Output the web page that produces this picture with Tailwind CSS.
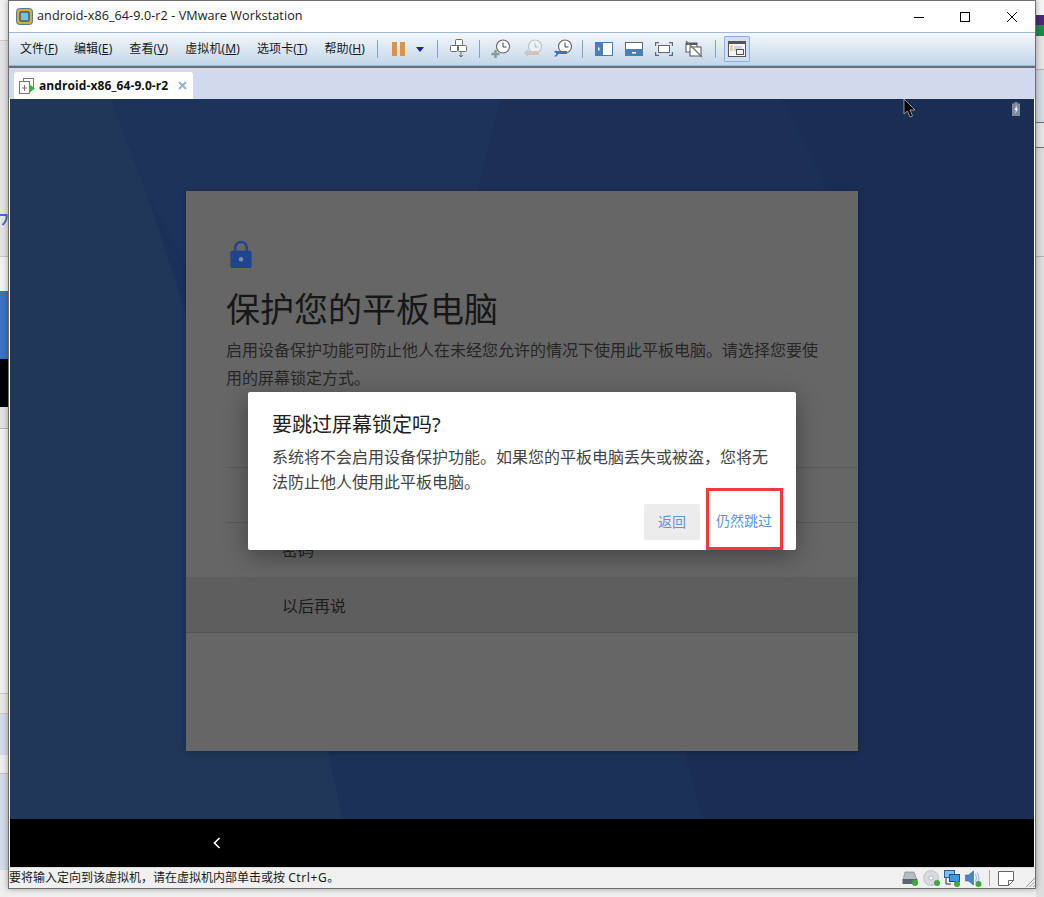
<!DOCTYPE html>
<html lang="zh-CN">
<head>
  <meta charset="UTF-8">
  <title>android-x86_64-9.0-r2 - VMware Workstation</title>
  <script src="https://cdn.jsdelivr.net/npm/@tailwindcss/browser@4"></script>
</head>
<body class="relative w-[1044px] h-[897px] overflow-hidden bg-[#f0f0f0] font-['Noto_Sans','Noto_Sans_CJK_SC',sans-serif]">

  <!-- desktop behind the window -->
  <div class="absolute left-0 top-0 w-[8px] h-[897px] flex flex-col">
    <div class="h-[40px] bg-[#f2f2f2]"></div>
    <div class="relative h-[216px] bg-[#e4e4e4] border-t border-[#c8c8c8]">
      <svg class="absolute left-0 top-[170px] w-[8px] h-[16px]" viewBox="0 0 8 16"><path d="M0 4h6.500q1 5-4 10" fill="none" stroke="#3f6fc4" stroke-width="2"/></svg>
    </div>
    <div class="h-[35px] bg-[#f2f2f2] border-t border-[#c8c8c8]"></div>
    <div class="h-[68px] bg-[#3f72c0]"></div>
    <div class="h-[48px] bg-black"></div>
    <div class="h-[22px] bg-[#e2e2e2] border-b border-[#b5b5b5]"></div>
    <div class="h-[264px] bg-[#f0f0f0]"></div>
    <div class="h-[20px] bg-[#e8e8e4] border-t border-[#c8c8c8]"></div>
    <div class="h-[42px] bg-[#d2dbe7] border-t border-[#c8c8c8]"></div>
    <div class="h-[18px] bg-[#eeeeee]"></div>
    <div class="h-[97px] bg-[#d2dbe7] border-t border-[#c0c0c0]"></div>
    <div class="flex-1 bg-[#eeeeee]"></div>
  </div>
  <div class="absolute right-0 top-0 w-[8px] h-[897px] flex flex-col bg-[#dedede]">
    <div class="h-[15px] bg-[#f4f4f4]"></div>
    <div class="h-[10px] bg-[#4a2a78]"></div>
    <div class="h-[11px] bg-[#1d8a4a]"></div>
    <div class="h-[33px] bg-[#e4e4e4]"></div>
    <div class="h-[53px] bg-[#d2dbe2] border-t border-[#b0b0b0]"></div>
    <div class="h-[25px] bg-[#e4e4e4] border-t border-[#6e6e6e]"></div>
    <div class="h-[109px] bg-[#dcdcdc] border-t border-[#6e6e6e]"></div>
    <div class="flex-1 bg-[#dedede] border-t border-[#b0b0b0]"></div>
  </div>

  <!-- VMware window -->
  <div class="absolute left-[8px] top-0 w-[1028px] h-[889px] flex flex-col bg-white border border-[#6e6e6e] shadow-[0_0_6px_rgba(0,0,0,0.35)]">

    <!-- title bar -->
    <div class="h-[31px] flex items-center bg-white shrink-0">
      <svg class="ml-[7px] w-[17px] h-[17px]" viewBox="0 0 17 17">
        <rect x="0.5" y="0.5" width="16" height="16" rx="3" fill="#e8a530" stroke="#4b7f9c"/>
        <rect x="4" y="4" width="9" height="9" rx="1" fill="#7dc3cf" stroke="#3b5f7a" stroke-width="1.5"/>
      </svg>
      <span class="ml-[4px] text-[12.6px] leading-none text-[#1a1a1a] font-['Open_Sans',sans-serif] tracking-[0.08px]">android-x86_64-9.0-r2 - VMware Workstation</span>
      <div class="ml-auto flex items-center">
        <svg class="w-[46px] h-[30px]" viewBox="0 0 46 30"><path d="M17 15.5h10" stroke="#000" stroke-width="1"/></svg>
        <svg class="w-[46px] h-[30px]" viewBox="0 0 46 30"><rect x="17.5" y="10.5" width="9" height="9" fill="none" stroke="#000" stroke-width="1"/></svg>
        <svg class="w-[46px] h-[30px]" viewBox="0 0 46 30"><path d="M18 10l10 10M28 10l-10 10" stroke="#000" stroke-width="1"/></svg>
      </div>
    </div>

    <!-- menu and toolbar -->
    <div class="h-[34px] shrink-0 flex items-center border-y border-[#9db9d4] bg-gradient-to-b from-[#f4f7fc] to-[#c3d6ea] text-[12px] text-[#1a1a1a]">
      <div class="flex items-center ml-[11px] gap-[17px] whitespace-nowrap tracking-[0.1px]">
        <span>文件(<span class="underline">F</span>)</span>
        <span class="-ml-[1px]">编辑(<span class="underline">E</span>)</span>
        <span>查看(<span class="underline">V</span>)</span>
        <span>虚拟机(<span class="underline">M</span>)</span>
        <span>选项卡(<span class="underline">T</span>)</span>
        <span>帮助(<span class="underline">H</span>)</span>
      </div>
      <div class="ml-auto mr-[285px] flex items-center">
        <div class="w-px h-[18px] bg-[#7ea3cc] mr-[14px]"></div>
        <!-- pause -->
        <div class="flex gap-[3px]"><div class="w-[5px] h-[14px] bg-[#d8934b]"></div><div class="w-[5px] h-[14px] bg-[#d8934b]"></div></div>
        <svg class="ml-[11px] w-[8px] h-[5px]" viewBox="0 0 8 5"><path d="M0 0h8L4 5z" fill="#1d1db8"/></svg>
        <div class="w-px h-[18px] bg-[#7ea3cc] ml-[13px] mr-[12px]"></div>
        <!-- send keys -->
        <svg class="w-[17px] h-[20px]" viewBox="0 0 17 20" fill="#fff" stroke="#6b6b6b">
          <rect x="5.5" y="0.5" width="7" height="6" rx="1"/><rect x="0.5" y="6.5" width="7" height="6" rx="1"/><rect x="8.5" y="6.5" width="8" height="6" rx="1"/>
          <path d="M11 13v5M9 16l2 2 2-2" fill="none"/>
        </svg>
        <div class="w-px h-[18px] bg-[#7ea3cc] ml-[12px] mr-[11px]"></div>
        <!-- snapshot -->
        <svg class="w-[20px] h-[20px]" viewBox="0 0 20 20" fill="none">
          <circle cx="12" cy="7.5" r="6.5" fill="#fff" stroke="#6b6b6b" stroke-width="1.2"/><path d="M12 3.5v4.5h3.5" stroke="#444"/>
          <path d="M4.5 11v8M0.5 15h8" stroke="#7fa08e" stroke-width="2.4"/>
        </svg>
        <svg class="ml-[12px] w-[20px] h-[20px] opacity-40" viewBox="0 0 20 20" fill="none">
          <circle cx="12" cy="7.5" r="6.5" fill="#fff" stroke="#8a8a8a" stroke-width="1.2"/><path d="M12 3.5v4.5h3.5" stroke="#777"/>
          <path d="M5 12h11v4H5v2l-4-4 4-4z" fill="#c89a72"/>
        </svg>
        <svg class="ml-[10px] w-[20px] h-[20px]" viewBox="0 0 20 20" fill="none">
          <circle cx="12" cy="7.5" r="6.5" fill="#fff" stroke="#6b6b6b" stroke-width="1.2"/><path d="M12 3.5v4.5h3.5" stroke="#444"/>
          <path d="M4 12h10v3H5a2.5 2.5 0 0 1-4 2l2-1v-2l-2-1a2.5 2.5 0 0 1 3-1z" fill="#3a75b5"/>
        </svg>
        <div class="w-px h-[18px] bg-[#7ea3cc] ml-[9px] mr-[12px]"></div>
        <!-- view modes -->
        <svg class="w-[18px] h-[14px]" viewBox="0 0 18 14"><rect x="0.5" y="0.5" width="17" height="13" fill="#fff" stroke="#4a7fb5"/><rect width="8" height="14" fill="#4a7fb5"/><rect x="3" y="5.5" width="1.5" height="3" fill="#fff"/></svg>
        <svg class="ml-[12px] w-[18px] h-[14px]" viewBox="0 0 18 14"><rect x="0.5" y="0.5" width="17" height="13" fill="#fff" stroke="#666"/><rect y="7" width="18" height="7" fill="#4a7fb5"/><rect x="7" y="10" width="4" height="1.5" fill="#fff"/></svg>
        <svg class="ml-[12px] w-[18px] h-[14px]" viewBox="0 0 18 14" fill="none" stroke="#666"><rect x="3.5" y="3.5" width="11" height="7" fill="#fff"/><path d="M0.5 4V0.5H4M14 .5h3.5V4M.5 10v3.5H4M14 13.5h3.5V10" stroke-width="1.3"/></svg>
        <svg class="ml-[12px] w-[18px] h-[18px]" viewBox="0 0 18 18" fill="none"><rect x="1" y="3" width="11" height="9" fill="#fff" stroke="#555"/><rect x="5" y="7" width="11" height="9" fill="#fff" stroke="#555"/><rect x="1" y="3" width="11" height="2" fill="#555"/><path d="M1 1l16 16" stroke="#777" stroke-width="1.5"/></svg>
        <div class="w-px h-[18px] bg-[#7ea3cc] ml-[12px] mr-[8px]"></div>
        <div class="w-[26px] h-[26px] flex items-center justify-center border border-[#8db1d8] bg-[#cfe0f3] rounded-[1px]">
          <svg class="w-[18px] h-[16px]" viewBox="0 0 18 16" fill="none"><rect x="0.5" y="0.5" width="17" height="15" fill="#f5f5f5" stroke="#555"/><rect width="18" height="3" fill="#555"/><path d="M2 5h3M2 7h3M2 9h3" stroke="#e0b050"/><rect x="6" y="5" width="8" height="5" fill="#c9d6ea"/><rect x="8.5" y="8.5" width="7" height="5" fill="#eee" stroke="#555"/></svg>
        </div>
      </div>
    </div>

    <!-- tab strip -->
    <div class="h-[33px] shrink-0 flex items-end border-t-2 border-[#6e6e6e] bg-[#d3d9ec]">
      <div class="ml-[5px] w-[179px] h-[27px] flex items-center bg-white rounded-t-[3px]">
        <svg class="ml-[5px] w-[16px] h-[16px]" viewBox="0 0 16 16" fill="#fff" stroke="#777"><rect x="4.5" y="0.5" width="10" height="10"/><rect x="0.5" y="3.5" width="10" height="12"/><path d="M5.5 7v6M3 10h5"/><path d="M10 6l6 4.500-6 4.500z" fill="#3eb03e" stroke="none"/></svg>
        <span class="ml-[4px] text-[12px] font-bold text-[#111] font-['Open_Sans',sans-serif] leading-none tracking-[0.1px]">android-x86_64-9.0-r2</span>
        <svg class="ml-auto mr-[6px] w-[9px] h-[9px]" viewBox="0 0 9 9"><path d="M1 1l7 7M8 1l-7 7" stroke="#9fb3c8" stroke-width="2"/></svg>
      </div>
    </div>

    <!-- guest screen -->
    <div class="relative w-[1024px] ml-[1px] h-[720px] shrink-0 bg-[#1c3157] overflow-hidden">
      <svg class="absolute inset-0 w-full h-full" viewBox="0 0 1024 720">
        <path d="M0 0H101L136 92L317 649L333 720H0z" fill="#20375a"/>
        <path d="M101 0H490L467 92L300 400L136 92z" fill="#1e3359"/>
        <path d="M490 0H771L817 92L700 300L467 92z" fill="#1b3054"/>
        <path d="M771 0H1024V720H693L673 649L848 400L817 92z" fill="#1a2e54"/>
      </svg>

      <!-- dimmed setup card -->
      <div class="absolute left-[176px] top-[92px] w-[672px] h-[560px] bg-[#666666] shadow-[0_1px_6px_rgba(0,0,0,0.3)] flex flex-col">
        <svg class="ml-[43px] mt-[49px] w-[24px] h-[29px]" viewBox="0 0 24 30">
          <path d="M6 12V8a6 6 0 0 1 12 0v4" fill="none" stroke="#1f4490" stroke-width="2.6"/>
          <rect x="1" y="11" width="22" height="18" rx="2" fill="#1f4490"/>
          <circle cx="12" cy="20" r="2.3" fill="#7c8aa8"/>
        </svg>
        <h1 class="ml-[40px] mt-[17px] text-[34px] leading-[46px] font-normal text-[#171717] whitespace-nowrap">保护您的平板电脑</h1>
        <p class="ml-[40px] mt-[4px] w-[600px] text-[16px] leading-[28px] text-[#262626]">启用设备保护功能可防止他人在未经您允许的情况下使用此平板电脑。请选择您要使用的屏幕锁定方式。</p>
        <div class="mt-[20px] ml-[40px] h-[55px]"></div>
        <div class="ml-[40px] h-[55px] border-t border-[#5a5a5a]"></div>
        <div class="ml-[40px] h-[55px] border-t border-[#5a5a5a] pl-[56px] flex items-center text-[16px] text-[#222]">密码</div>
        <div class="h-[56px] bg-[#5e5e5e] flex items-center pl-[96px] pt-[2px] text-[16px] text-[#1c1c1c] border-b border-[#545454]">以后再说</div>
      </div>

      <!-- dialog -->
      <div class="absolute left-[238px] top-[293px] w-[548px] h-[158px] bg-white rounded-[2px] shadow-[0_6px_24px_rgba(0,0,0,0.35)] px-[24px] pt-[19px]">
        <h2 class="text-[20px] leading-[28px] font-normal text-[#212121]">要跳过屏幕锁定吗?</h2>
        <p class="mt-[6px] text-[16px] leading-[25px] text-[#444444] w-[500px]">系统将不会启用设备保护功能。如果您的平板电脑丢失或被盗，您将无法防止他人使用此平板电脑。</p>
        <div class="absolute left-[396px] top-[112px] w-[56px] h-[36px] rounded-[2px] bg-[#ececec] flex items-center justify-center pb-[1px] text-[14px] text-[#5a94f0]">返回</div>
        <div class="absolute left-[458px] top-[96px] w-[77px] h-[62px] border-[3px] border-[#f23a3a] flex items-center justify-center pt-[2px] pr-[1px] text-[14px] text-[#5a94f0]">仍然跳过</div>
      </div>

      <!-- battery icon -->
      <svg class="absolute left-[1002px] top-[3px] w-[8px] h-[14px]" viewBox="0 0 8 14"><path d="M2.5 0h3v1.5H8V14H0V1.5h2.5z" fill="#7d8ba3"/><path d="M5 3L2.5 8H4l-1 4 3-5.500H4.500z" fill="#fff"/></svg>

      <!-- mouse pointer -->
      <svg class="absolute left-[893px] top-0 w-[16px] h-[22px]" viewBox="0 0 16 22"><path d="M1 0v15l3.500-3 2.500 6 2.500-1-2.500-6h5z" fill="#000" stroke="#ccc" stroke-width="0.7"/></svg>
    </div>

    <!-- android nav bar -->
    <div class="w-[1024px] ml-[1px] h-[48px] shrink-0 bg-black flex items-center pl-[203px]">
      <svg class="w-[8px] h-[12px]" viewBox="0 0 8 12"><path d="M6.500 1L1.500 6l5 5" fill="none" stroke="#fff" stroke-width="1.600"/></svg>
    </div>

    <!-- status bar -->
    <div class="flex-1 flex items-center bg-[#f0f0f0] border-t border-[#dcdcdc] text-[12px] text-[#1a1a1a] whitespace-nowrap">
      <span class="leading-none">要将输入定向到该虚拟机，请在虚拟机内部单击或按 <span class="tracking-[0.6px]">Ctrl+G。</span></span>
      <div class="ml-auto flex items-center">
        <svg class="w-[17px] h-[15px]" viewBox="0 0 17 15"><path d="M3 1h9l3 8H1z" fill="#b5bcc4" stroke="#777" stroke-width="0.6"/><rect x="0.500" y="8" width="15" height="5" fill="#5d6670"/><circle cx="13" cy="12" r="3" fill="#3cab3c"/></svg>
        <svg class="ml-[4px] w-[17px] h-[16px]" viewBox="0 0 17 16"><circle cx="8" cy="8" r="7.500" fill="#d6dbe0" stroke="#a8adb3" stroke-width="0.6"/><circle cx="8" cy="8" r="2" fill="#fff" stroke="#999" stroke-width="0.6"/><circle cx="14" cy="13" r="3" fill="#3cab3c"/></svg>
        <svg class="ml-[4px] w-[17px] h-[17px]" viewBox="0 0 17 17"><rect x="0.500" y="0.500" width="10" height="7" fill="#7cc0ee" stroke="#2b5f9e"/><rect x="5.500" y="4.500" width="10" height="7" fill="#3f9be0" stroke="#1f4f8e"/><path d="M2 8v6h5" fill="none" stroke="#333"/><circle cx="13" cy="14" r="3" fill="#3cab3c"/></svg>
        <svg class="ml-[4px] w-[17px] h-[17px]" viewBox="0 0 17 17"><path d="M0.500 5h3l5-4v14l-5-4h-3z" fill="#4a86c5" stroke="#2b5f9e" stroke-width="0.6"/><path d="M10.500 4q2 4 0 8M12.500 2.500q3 5.500 0 11" fill="none" stroke="#8fb6dc"/><circle cx="13.500" cy="14" r="3" fill="#3cab3c"/></svg>
        <div class="ml-[7px] w-px h-[16px] bg-[#a8a8a8]"></div>
        <svg class="ml-[8px] w-[16px] h-[15px]" viewBox="0 0 16 15"><path d="M0.500 0.500h15v9l-5 5h-10z" fill="#fff" stroke="#666"/><path d="M15.500 9.500h-5v5" fill="none" stroke="#666"/></svg>
        <svg class="ml-[11px] self-end w-[10px] h-[10px]" viewBox="0 0 10 10"><path d="M10 1L1 10M10 4.500L4.500 10M10 8L8 10" stroke="#9a9a9a" stroke-width="1"/></svg>
      </div>
    </div>
  </div>
</body>
</html>
